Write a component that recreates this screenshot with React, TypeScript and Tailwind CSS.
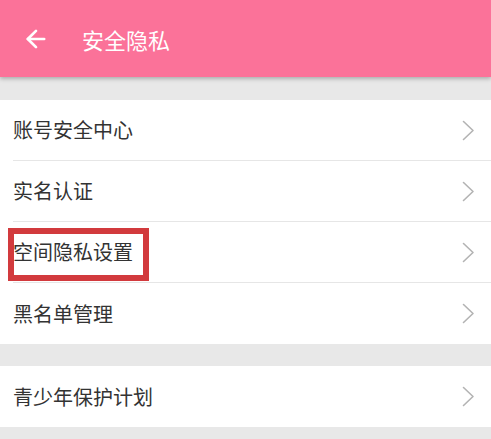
import { ArrowLeft } from "lucide-react";

const groups = [
  ["账号安全中心", "实名认证", "空间隐私设置", "黑名单管理"],
  ["青少年保护计划"],
];

const Chevron = () => (
  <svg width="13" height="21" viewBox="0 0 13 21" fill="none" className="shrink-0">
    <path d="M1.5 1.5 L11 10.5 L1.5 19.5" stroke="#b3b3b3" strokeWidth="1.6" strokeLinecap="round" strokeLinejoin="round" />
  </svg>
);

export default function App() {
  return (
    <div
      className="w-[491px] h-[439px] overflow-hidden bg-[#e8e8e8]"
      style={{ fontFamily: '"Noto Sans CJK SC", "Noto Sans", sans-serif' }}
    >
      {/* Toolbar */}
      <div className="relative z-10 h-[77px] bg-[#fb7299] flex items-center shadow-[0_2px_4px_rgba(0,0,0,0.25)]">
        <ArrowLeft className="ml-[22px] w-[28px] h-[28px] text-white" strokeWidth={2.3} />
        <span className="ml-[32px] text-[22px] text-white leading-none">安全隐私</span>
      </div>

      <div className="pt-[23px] flex flex-col gap-[22px]">
        {groups.map((items, gi) => (
          <div key={gi} className="bg-white">
            {items.map((label, i) => (
              <div key={label} className="pl-[13px]">
                <div
                  className={`h-[61px] flex items-center pr-[16px] ${
                    i < items.length - 1 ? "border-b border-[#e6e6e6]" : ""
                  }`}
                >
                  <span className="relative flex-1 text-[20px] text-[#333333] leading-none">
                    {label}
                    {label === "空间隐私设置" && (
                      <span className="absolute left-[-5px] top-[-14px] w-[141px] h-[53px] border-[6px] border-[#d23a3d]" />
                    )}
                  </span>
                  <Chevron />
                </div>
              </div>
            ))}
          </div>
        ))}
      </div>
    </div>
  );
}
